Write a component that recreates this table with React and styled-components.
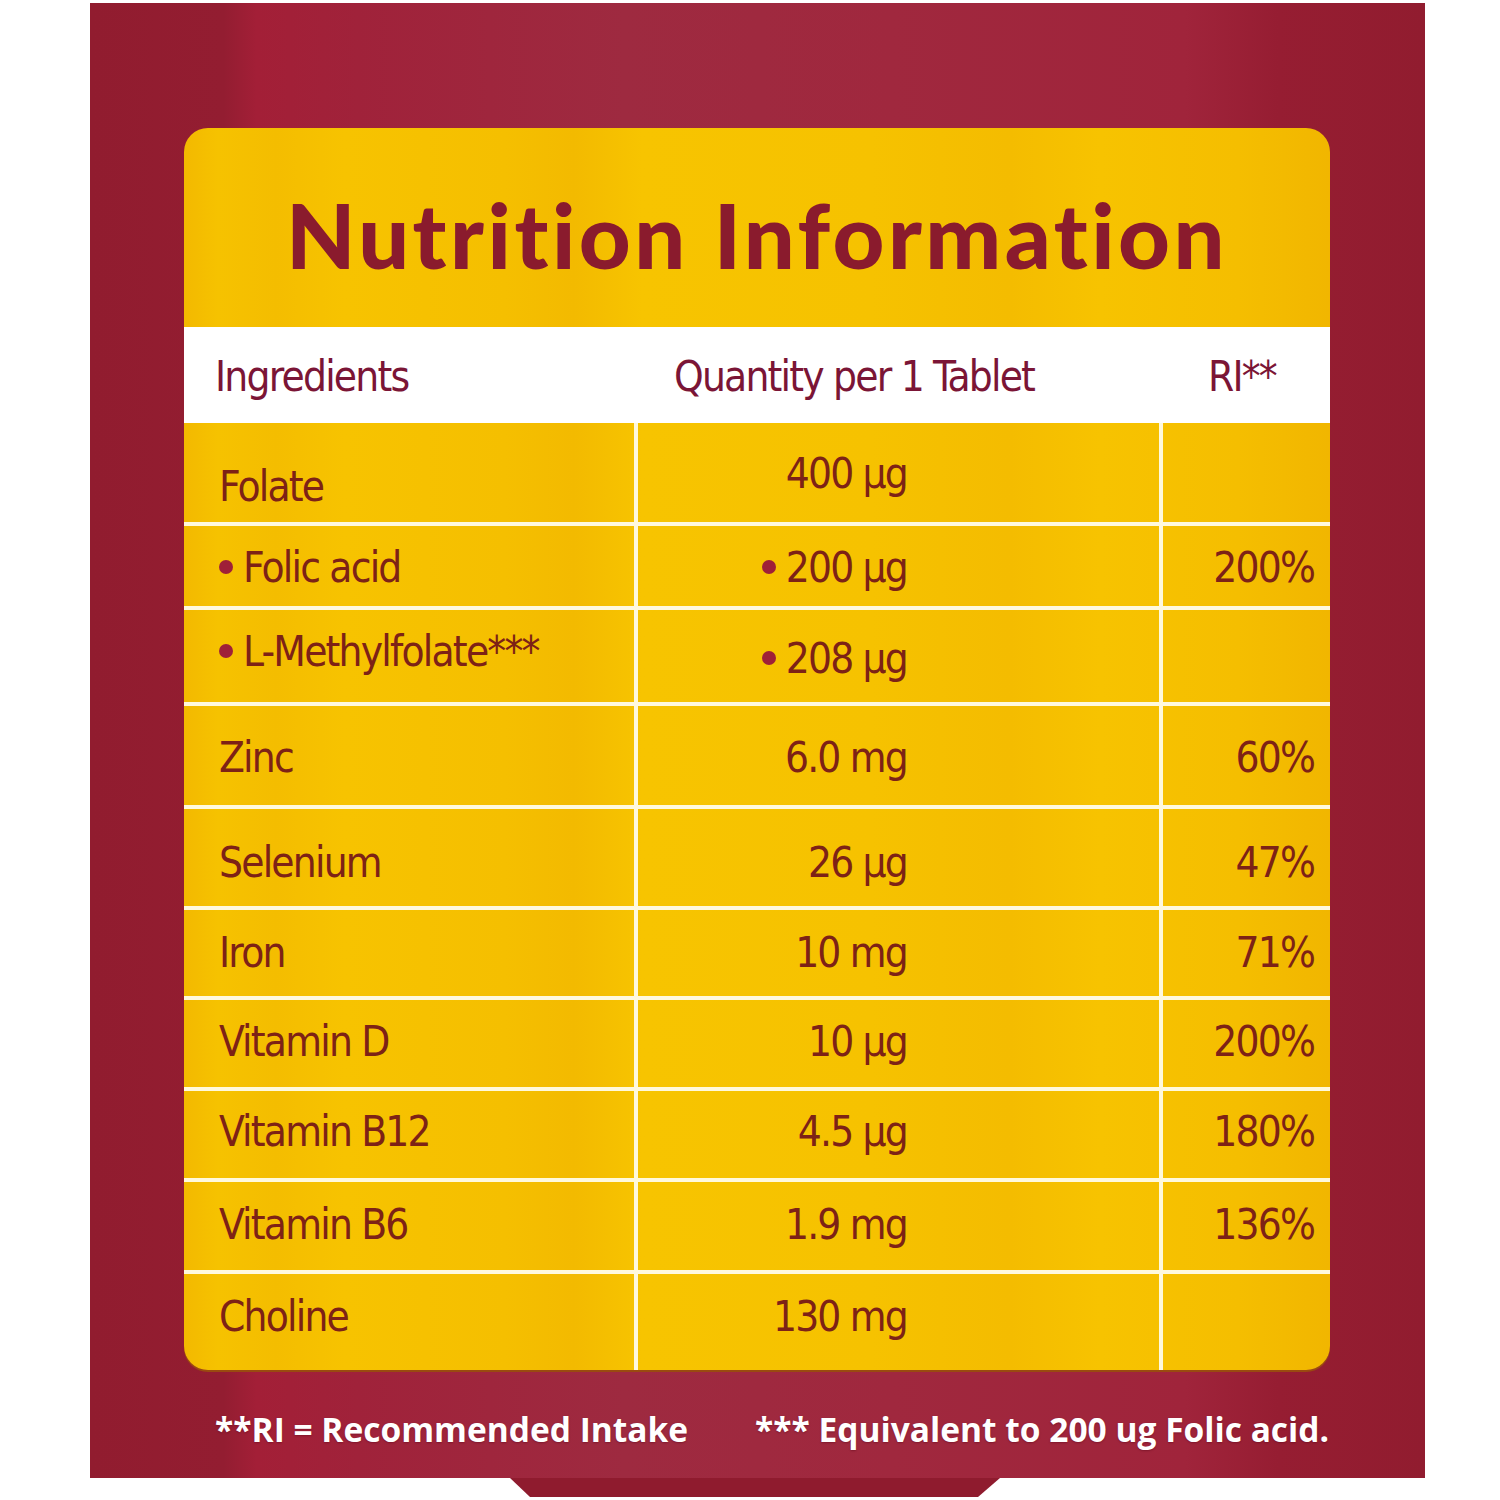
import React from 'react';
import styled, { createGlobalStyle } from 'styled-components';

const GlobalStyle = createGlobalStyle`
  body {
    margin: 0;
    background: #ffffff;
    font-family: "Liberation Sans", Arial, sans-serif;
  }
`;

const rows = [
  { name: 'Folate', qty: '400 µg', ri: '', h: 95, nameShift: 28, qtyShift: 2 },
  { name: 'Folic acid', qty: '200 µg', ri: '200%', h: 81, bullet: true, nameShift: 2, qtyShift: 2 },
  { name: 'L-Methylfolate***', qty: '208 µg', ri: '', h: 92, bullet: true, nameShift: -10, qtyShift: 4 },
  { name: 'Zinc', qty: '6.0 mg', ri: '60%', h: 99, nameShift: 4, qtyShift: 4 },
  { name: 'Selenium', qty: '26 µg', ri: '47%', h: 98, nameShift: 10, qtyShift: 10 },
  { name: 'Iron', qty: '10 mg', ri: '71%', h: 86, nameShift: -2, qtyShift: -2 },
  { name: 'Vitamin D', qty: '10 µg', ri: '200%', h: 87, nameShift: -4, qtyShift: -4 },
  { name: 'Vitamin B12', qty: '4.5 µg', ri: '180%', h: 87, nameShift: -6, qtyShift: -6 },
  { name: 'Vitamin B6', qty: '1.9 mg', ri: '136%', h: 89, nameShift: -2, qtyShift: -2 },
  { name: 'Choline', qty: '130 mg', ri: '', h: 96, nameShift: -12, qtyShift: -12 },
];

const condensed = `"DejaVu Sans Condensed", "Liberation Sans Narrow", "Roboto Condensed", "Liberation Sans", sans-serif`;

const NutritionPanel = () => {
  return (
    <>
      <GlobalStyle />
      <Page>
        <Panel>
          <Card>
            <Title>Nutrition Information</Title>
            <HeaderRow>
              <HeadCell $pad={31}>Ingredients</HeadCell>
              <HeadCell $pad={36}>Quantity per 1 Tablet</HeadCell>
              <HeadCell $pad={45}>RI**</HeadCell>
            </HeaderRow>
            {rows.map((r) => (
              <Row key={r.name} $h={r.h}>
                <NameCell $shift={r.nameShift || 0}>
                  {r.bullet && <Bullet />}
                  {r.name}
                </NameCell>
                <QtyCell $shift={r.qtyShift || 0}>
                  {r.bullet && <Bullet />}
                  {r.qty}
                </QtyCell>
                <RiCell $shift={r.nameShift || 0}>{r.ri}</RiCell>
              </Row>
            ))}
          </Card>
          <Footer>
            <Note>**RI = Recommended Intake</Note>
            <Note>*** Equivalent to 200 ug Folic acid.</Note>
          </Footer>
        </Panel>
        <Tab />
      </Page>
    </>
  );
};

const Page = styled.div`
  padding: 3px 0 0 90px;
`;

const Panel = styled.div`
  box-sizing: border-box;
  width: 1335px;
  height: 1475px;
  padding: 125px 95px 0 94px;
  display: flex;
  flex-direction: column;
  background: linear-gradient(
    90deg,
    #911c2f 0%,
    #931d31 10%,
    #a31f37 12.5%,
    #a0223a 20%,
    #9e2a40 40%,
    #a0283e 60%,
    #a0243b 82%,
    #961d32 89%,
    #911c2f 100%
  );
`;

const Card = styled.div`
  width: 1146px;
  height: 1242px;
  border-radius: 24px;
  overflow: hidden;
  display: flex;
  flex-direction: column;
  box-shadow: 0 2px 0 #9a4a10;
  background: linear-gradient(
    90deg,
    #f3b900 0%,
    #f6c200 3%,
    #f4bd00 8%,
    #f7c300 14%,
    #f5bf00 28%,
    #f3ba00 34%,
    #f7c400 40%,
    #f6c200 60%,
    #f4bc00 72%,
    #f7c300 80%,
    #f5be00 92%,
    #f1b600 100%
  );
`;

const Title = styled.h1`
  margin: 0;
  height: 200px;
  display: flex;
  align-items: center;
  justify-content: center;
  padding-top: 12px;
  box-sizing: border-box;
  font-family: Lato, "Open Sans", sans-serif;
  font-weight: 900;
  font-size: 90px;
  letter-spacing: 3.5px;
  color: #8a1b2d;
`;

const HeaderRow = styled.div`
  height: 96px;
  background: #ffffff;
  display: grid;
  grid-template-columns: 454px 525px 167px;
  align-items: center;
`;

const HeadCell = styled.div`
  padding-left: ${(p) => p.$pad}px;
  padding-top: 2px;
  font-family: ${condensed};
  font-size: 42px;
  letter-spacing: -1.8px;
  color: #7b1536;
`;

const Row = styled.div`
  height: ${(p) => p.$h}px;
  border-top: 4px solid #fff9dc;
  display: grid;
  grid-template-columns: 450px 529px 167px;
  &:nth-of-type(2) {
    border-top: none;
    height: ${(p) => p.$h + 4}px;
  }
`;

const Cell = styled.div`
  display: flex;
  align-items: center;
  font-family: ${condensed};
  font-size: 42px;
  letter-spacing: -1.8px;
  color: #7d2216;
  padding-top: ${(p) => Math.max(p.$shift, 0)}px;
  padding-bottom: ${(p) => Math.max(-p.$shift, 0)}px;
`;

const NameCell = styled(Cell)`
  padding-left: 35px;
`;

const QtyCell = styled(Cell)`
  justify-content: flex-end;
  padding-right: 252px;
  border-left: 4px solid #fff9dc;
  border-right: 4px solid #fff9dc;
`;

const RiCell = styled(Cell)`
  justify-content: flex-end;
  padding-right: 16px;
`;

const Bullet = styled.span`
  width: 14px;
  height: 14px;
  border-radius: 50%;
  background: #9f2038;
  margin-right: 10px;
  flex-shrink: 0;
`;

const Footer = styled.div`
  flex: 1;
  display: flex;
  align-items: center;
  gap: 67px;
  padding: 10px 0 0 31px;
`;

const Note = styled.div`
  font-family: "Open Sans", Lato, sans-serif;
  font-weight: 700;
  font-size: 33.5px;
  color: #ffffff;
  text-shadow: 0 1px 2px rgba(80, 0, 20, 0.4);
  white-space: nowrap;
`;

const Tab = styled.div`
  margin-left: 420px;
  width: 490px;
  height: 19px;
  background: #8f1b2e;
  clip-path: polygon(0 0, 100% 0, calc(100% - 22px) 100%, 20px 100%);
`;

export default NutritionPanel;
